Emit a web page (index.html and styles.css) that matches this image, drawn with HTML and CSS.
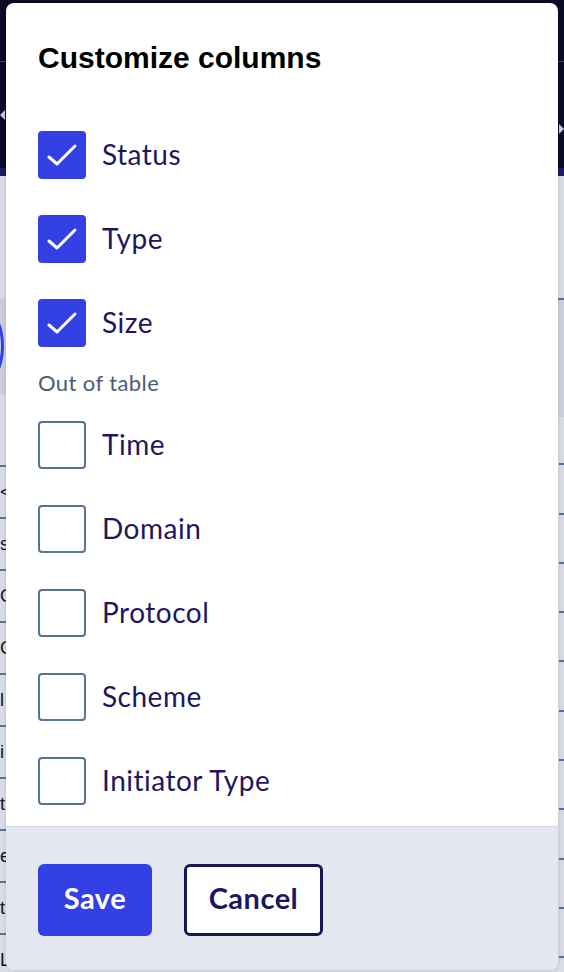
FILE: index.html
```html
<!DOCTYPE html>
<html lang="en">
<head>
<meta charset="utf-8">
<title>Customize columns</title>
<link rel="stylesheet" href="styles.css">
</head>
<body>
<div class="page">
  <header class="topbar">
    <div class="topbar-top"></div>
    <div class="topbar-bottom"><span class="tri tri-left"></span><span class="tri tri-right"></span></div>
  </header>
  <div class="accent"></div>
  <div class="content">
    <div class="toolbar">
      <div class="search"><span class="search-ring"></span></div>
      <div class="filter"><span class="chev"></span></div>
    </div>
    <div class="table">
      <div class="col col-left">
        <div class="row"></div>
        <div class="row"><span class="cell">&lt;</span></div>
        <div class="row"><span class="cell">s</span></div>
        <div class="row"><span class="cell">G</span></div>
        <div class="row"><span class="cell">G</span></div>
        <div class="row"><span class="cell">l</span></div>
        <div class="row"><span class="cell">i</span></div>
        <div class="row"><span class="cell">t</span></div>
        <div class="row"><span class="cell">e</span></div>
        <div class="row"><span class="cell">t</span></div>
        <div class="row"><span class="cell">L</span></div>
      </div>
      <div class="col col-right">
        <div class="row"></div><div class="row"></div><div class="row"></div><div class="row"></div><div class="row"></div>
        <div class="row"></div><div class="row"></div><div class="row"></div><div class="row"></div><div class="row"></div>
        <div class="row"></div>
      </div>
    </div>
  </div>
</div>

<div class="modal" role="dialog" aria-labelledby="modal-title">
  <div class="modal-body">
    <h2 class="modal-title" id="modal-title">Customize columns</h2>
    <ul class="options">
      <li class="option"><span class="box checked"><svg viewBox="0 0 48 48" width="48" height="48"><path d="M11 26 L19 33 L37 15" fill="none" stroke="#fff" stroke-width="3" stroke-linecap="round" stroke-linejoin="round"/></svg></span><span class="label">Status</span></li>
      <li class="option"><span class="box checked"><svg viewBox="0 0 48 48" width="48" height="48"><path d="M11 26 L19 33 L37 15" fill="none" stroke="#fff" stroke-width="3" stroke-linecap="round" stroke-linejoin="round"/></svg></span><span class="label">Type</span></li>
      <li class="option"><span class="box checked"><svg viewBox="0 0 48 48" width="48" height="48"><path d="M11 26 L19 33 L37 15" fill="none" stroke="#fff" stroke-width="3" stroke-linecap="round" stroke-linejoin="round"/></svg></span><span class="label">Size</span></li>
    </ul>
    <div class="section-label">Out of table</div>
    <ul class="options">
      <li class="option"><span class="box"></span><span class="label">Time</span></li>
      <li class="option"><span class="box"></span><span class="label">Domain</span></li>
      <li class="option"><span class="box"></span><span class="label">Protocol</span></li>
      <li class="option"><span class="box"></span><span class="label">Scheme</span></li>
      <li class="option"><span class="box"></span><span class="label">Initiator Type</span></li>
    </ul>
  </div>
  <div class="modal-footer">
    <button class="btn btn-primary" type="button">Save</button>
    <button class="btn btn-secondary" type="button">Cancel</button>
  </div>
</div>
</body>
</html>
```

FILE: styles.css
```css
* { box-sizing: border-box; }

html, body {
  margin: 0;
  padding: 0;
  height: 972px;
  overflow: hidden;
}

body {
  background: #dadde7;
  font-family: Lato, "Noto Sans", sans-serif;
  position: relative;
}

/* ---------- background page ---------- */
.page {
  height: 972px;
  display: flex;
  flex-direction: column;
  overflow: hidden;
}

.topbar {
  flex: none;
  background: #0c0b26;
  height: 168px;
  display: flex;
  flex-direction: column;
}

.topbar-top {
  flex: none;
  height: 62px;
  border-bottom: 1px solid #3d4160;
}

.topbar-bottom {
  flex: 1;
  position: relative;
}

.tri {
  position: absolute;
  width: 0;
  height: 0;
  border-top: 5px solid transparent;
  border-bottom: 5px solid transparent;
}
.tri-left { left: 0; top: 48px; border-right: 5px solid #c9cbd8; }
.tri-right { right: 0; top: 62px; border-left: 5px solid #c9cbd8; }

.accent {
  flex: none;
  height: 8px;
  background: #1d1a66;
}

.content {
  flex: 1;
  min-height: 0;
  overflow: hidden;
  background: #d9dce6;
  padding-top: 122px;
}

.toolbar {
  display: flex;
  justify-content: space-between;
  height: 97px;
}

.search {
  width: 30px;
  height: 97px;
  background: #cbcfdb;
  position: relative;
  overflow: hidden;
}
.search-ring {
  position: absolute;
  left: -40px;
  top: 8px;
  width: 44px;
  height: 80px;
  border: 3px solid #3340e6;
  border-radius: 50%;
}

.filter {
  width: 30px;
  height: 119px;
  background: #cdd0dc;
  border-top: 2px solid #5b6f91;
  position: relative;
}
.chev {
  position: absolute;
  left: 2px;
  top: 50px;
  width: 9px;
  height: 9px;
  border-right: 2px solid #5b6f91;
  border-bottom: 2px solid #5b6f91;
  transform: rotate(45deg);
}

.table {
  display: flex;
  justify-content: space-between;
}

.col-left {
  width: 30px;
  margin-top: 20px;
}

.col-left .row {
  height: 52px;
  border-bottom: 2px solid #5a7394;
  display: flex;
  align-items: center;
}

.cell {
  white-space: nowrap;
  font-family: "Liberation Sans", Arial, sans-serif;
  font-size: 18px;
  color: #111;
}

.col-right {
  width: 5px;
  margin-top: 21px;
}

.col-right .row {
  height: 49.3px;
  border-bottom: 2px solid #5b6f91;
}

/* ---------- modal ---------- */
.modal {
  position: absolute;
  left: 6px;
  top: 3px;
  width: 552px;
  height: 967px;
  background: #fff;
  border-radius: 8px;
  overflow: hidden;
  display: flex;
  flex-direction: column;
  box-shadow: 0 0 4px rgba(0, 0, 0, 0.15);
}

.modal-body {
  flex: 1;
  padding: 37px 32px 20px;
}

.modal-title {
  margin: 0 0 55px;
  font-family: "Liberation Sans", Arial, Helvetica, sans-serif;
  font-weight: 700;
  font-size: 30px;
  line-height: 36px;
  color: #000;
}

.options {
  list-style: none;
  margin: 0;
  padding: 0;
  display: flex;
  flex-direction: column;
  gap: 36px;
}

.option {
  display: flex;
  align-items: center;
  gap: 16px;
  height: 48px;
}

.box {
  width: 48px;
  height: 48px;
  flex: none;
  border: 2px solid #5a7394;
  border-radius: 4px;
  background: #fff;
  display: flex;
}

.box.checked {
  border: none;
  background: #3340e6;
}

.label {
  font-size: 28px;
  letter-spacing: 0.5px;
  color: #1e1760;
  line-height: 1.2;
}

.section-label {
  margin: 22px 0 24px;
  font-size: 22px;
  letter-spacing: 0.4px;
  line-height: 28px;
  color: #4a5b7a;
}

.modal-footer {
  flex: none;
  height: 144px;
  background: #e4e7f0;
  border-top: 1px solid #d4d8e2;
  padding: 37px 32px 0;
  display: flex;
  align-items: flex-start;
  gap: 32px;
}

.btn {
  height: 72px;
  padding: 0 0 6px;
  border-radius: 6px;
  font-family: Lato, "Noto Sans", sans-serif;
  font-weight: 700;
  font-size: 29px;
  letter-spacing: 0.5px;
  cursor: pointer;
}

.btn-primary {
  width: 114px;
  background: #3340e6;
  color: #fff;
  border: none;
}

.btn-secondary {
  width: 139px;
  background: #fff;
  color: #1e1760;
  border: 3px solid #1b1656;
}
```
